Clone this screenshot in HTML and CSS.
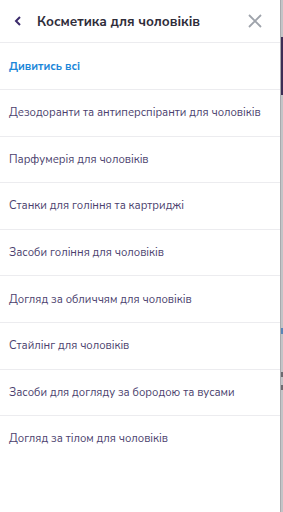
FILE: index.html
```html
<!DOCTYPE html>
<html lang="uk">
<head>
  <meta charset="UTF-8" />
  <meta name="viewport" content="width=device-width, initial-scale=1.0" />
  <title>Косметика для чоловіків</title>
  <link rel="stylesheet" href="styles.css">
</head>
<body>
  <div class="page">
    <nav class="menu">
      <div class="menu-header">
        <button class="back-btn" aria-label="Назад">
          <svg width="8" height="10" viewBox="0 0 8 10"><path d="M6 1 L2 5 L6 9" fill="none" stroke="#3b2a6b" stroke-width="2"/></svg>
        </button>
        <h3 class="menu-title">Косметика для чоловіків</h3>
        <button class="close-btn" aria-label="Закрити">
          <svg width="14" height="14" viewBox="0 0 14 14"><path d="M1 1 L13 13 M13 1 L1 13" fill="none" stroke="#9ea3ab" stroke-width="1.8"/></svg>
        </button>
      </div>
      <ul class="menu-list">
        <li class="menu-item all"><a href="#">Дивитись всі</a></li>
        <li class="menu-item"><a href="#">Дезодоранти та антиперспіранти для чоловіків</a></li>
        <li class="menu-item"><a href="#">Парфумерія для чоловіків</a></li>
        <li class="menu-item"><a href="#">Станки для гоління та картриджі</a></li>
        <li class="menu-item"><a href="#">Засоби гоління для чоловіків</a></li>
        <li class="menu-item"><a href="#">Догляд за обличчям для чоловіків</a></li>
        <li class="menu-item"><a href="#">Стайлінг для чоловіків</a></li>
        <li class="menu-item"><a href="#">Засоби для догляду за бородою та вусами</a></li>
        <li class="menu-item last"><a href="#">Догляд за тілом для чоловіків</a></li>
      </ul>
    </nav>
    <div class="backdrop">
      <span class="peek dark"></span>
      <span class="peek blue"></span>
      <span class="peek gray"></span>
      <span class="peek gray2"></span>
    </div>
  </div>
</body>
</html>
```

FILE: styles.css
```css
html, body {
  margin: 0;
  height: 100%;
}

body {
  font-family: "Nunito Sans", Lato, "Open Sans", sans-serif;
  background: #ffffff;
}

.page {
  display: flex;
  height: 512px;
}

.menu {
  width: 280px;
  background: #fff;
  border-right: 1px solid #a9a9ad;
}

.menu-header {
  display: flex;
  align-items: center;
  height: 42px;
  padding: 0 18px 0 14px;
  border-bottom: 1px solid #ececef;
}

.back-btn,
.close-btn {
  background: none;
  border: 0;
  padding: 0;
  display: flex;
  cursor: pointer;
}

.menu-title {
  flex: 1;
  margin: 0 0 0 15px;
  font-size: 13.5px;
  font-weight: 700;
  color: #2f2d3a;
}

.menu-list {
  list-style: none;
  margin: 0;
  padding: 0;
}

.menu-item {
  height: 45.6px;
  display: flex;
  align-items: center;
  padding: 0 9px;
  border-bottom: 1px solid #ececef;
}

.menu-item.all {
  height: 46px;
}

.menu-item.last {
  border-bottom: 0;
}

.menu-item a {
  text-decoration: none;
  font-size: 11.3px;
  color: #4b3f6e;
}

.menu-item.all a {
  color: #1c87d9;
  font-weight: 700;
}

.backdrop {
  flex: 1;
  background: #c4c4c7;
  display: flex;
  flex-direction: column;
}

.peek {
  display: block;
  width: 100%;
}

.peek.dark {
  margin-top: 37px;
  height: 58px;
  background: #3c2d55;
}

.peek.blue {
  margin-top: 233px;
  height: 6px;
  background: #5a86b8;
}

.peek.gray {
  margin-top: 38px;
  height: 5px;
  background: #6d6a70;
}

.peek.gray2 {
  margin-top: 8px;
  height: 5px;
  background: #6d6a70;
}
```
